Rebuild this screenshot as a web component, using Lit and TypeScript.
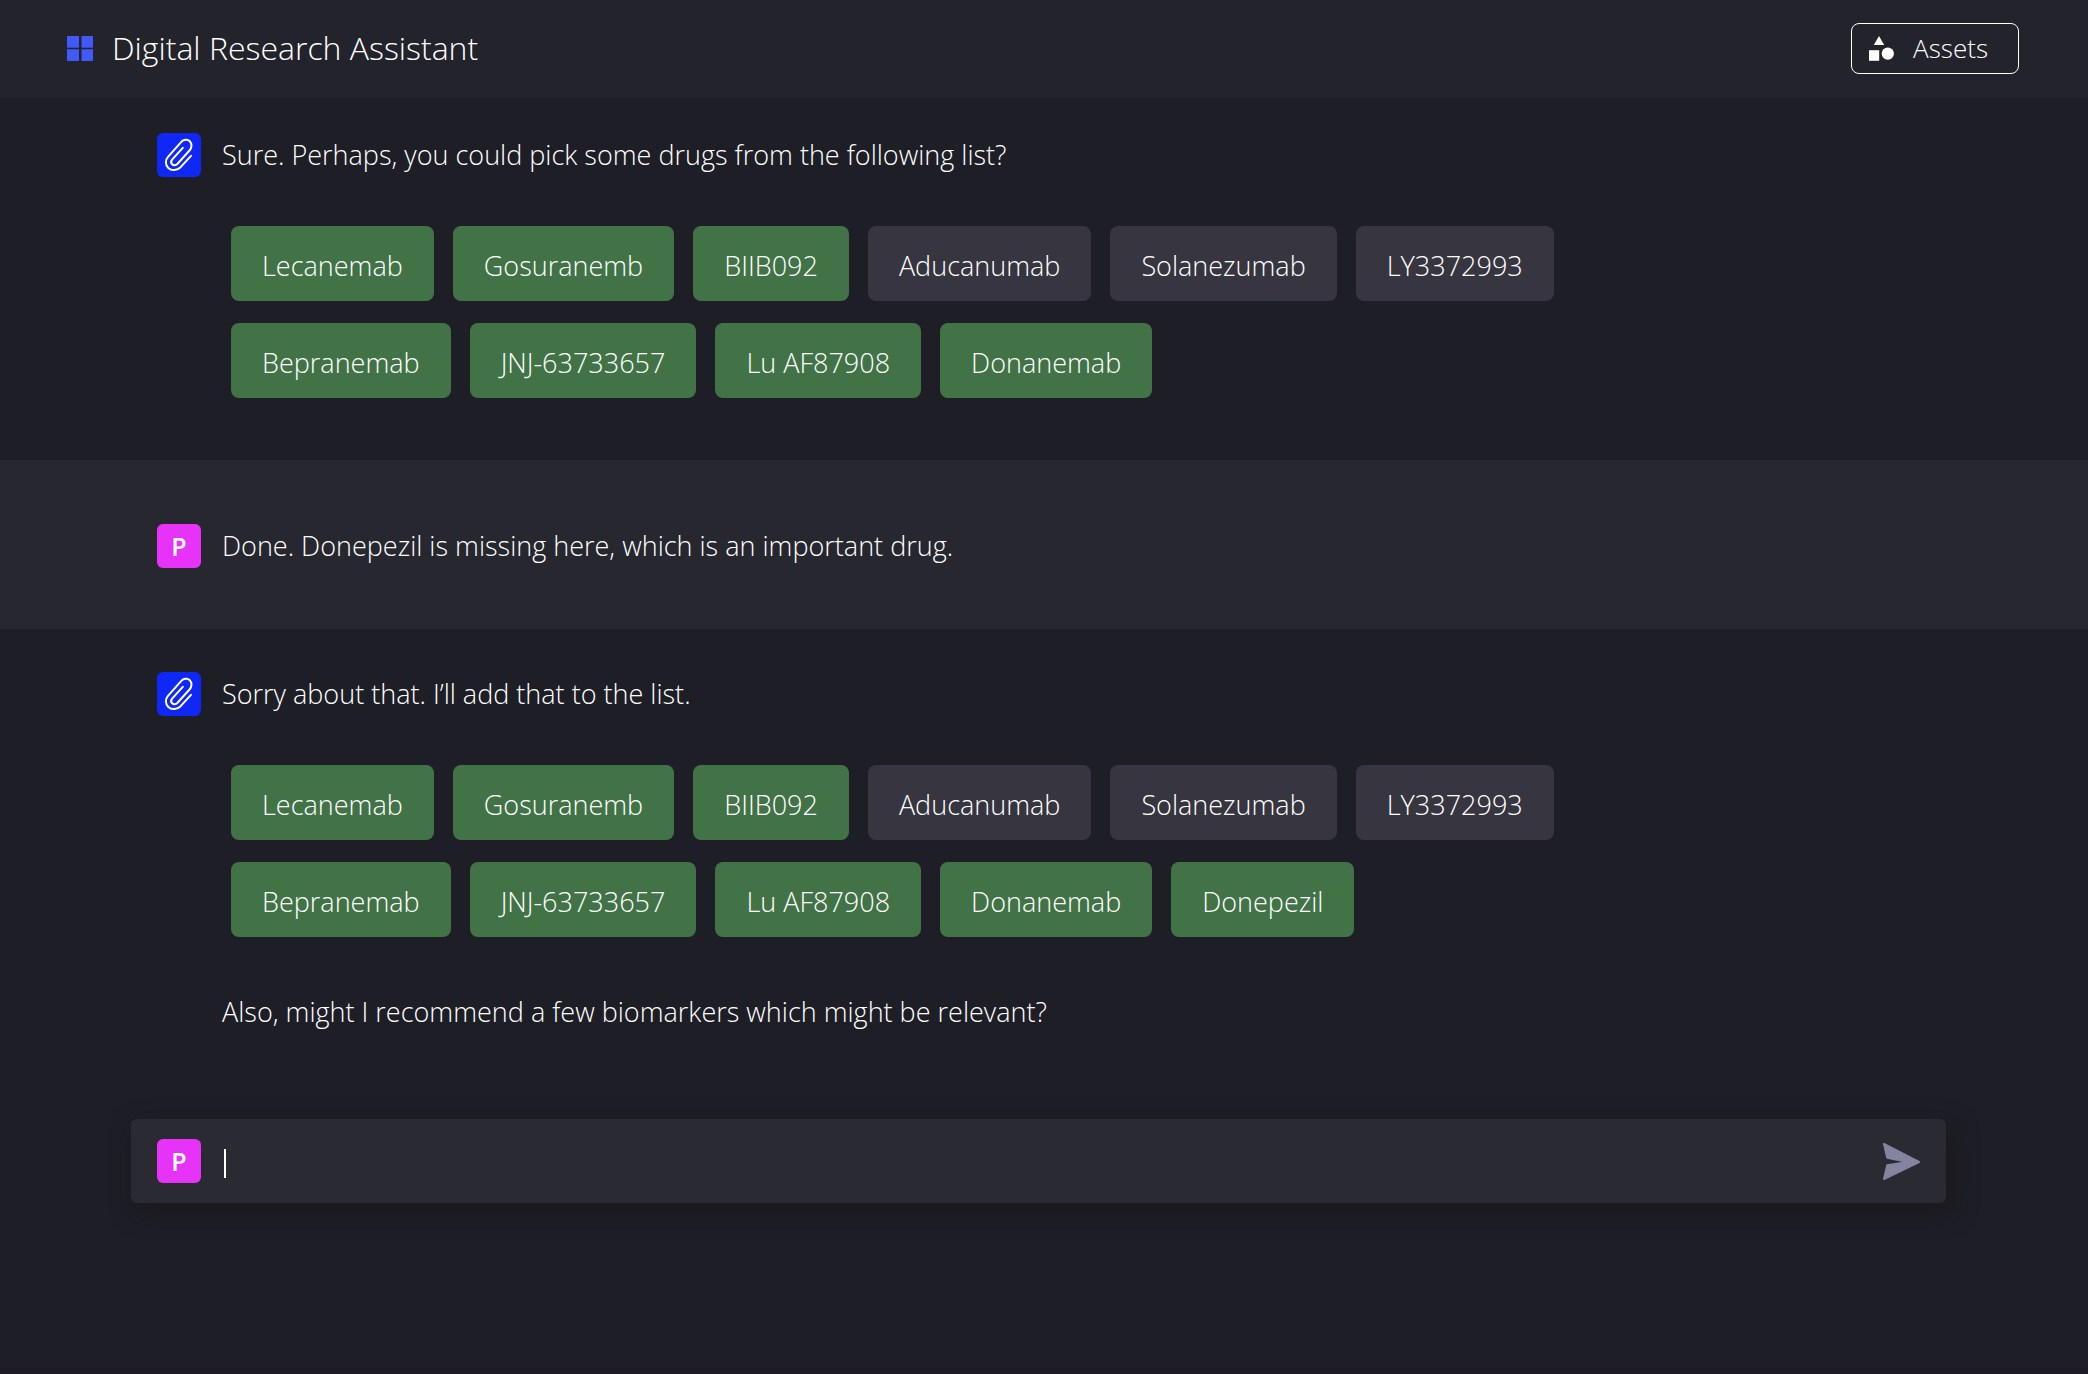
import { LitElement, html, css, svg, nothing } from "lit";
import { customElement, property, state } from "lit/decorators.js";
import { classMap } from "lit/directives/class-map.js";

interface Drug {
  name: string;
  selected: boolean;
}

interface Message {
  author: "assistant" | "user";
  text: string;
  drugs?: Drug[];
  followUp?: string;
}

const baseDrugs: Drug[] = [
  { name: "Lecanemab", selected: true },
  { name: "Gosuranemb", selected: true },
  { name: "BIIB092", selected: true },
  { name: "Aducanumab", selected: false },
  { name: "Solanezumab", selected: false },
  { name: "LY3372993", selected: false },
  { name: "Bepranemab", selected: true },
  { name: "JNJ-63733657", selected: true },
  { name: "Lu AF87908", selected: true },
  { name: "Donanemab", selected: true },
];

const conversation: Message[] = [
  {
    author: "assistant",
    text: "Sure. Perhaps, you could pick some drugs from the following list?",
    drugs: baseDrugs,
  },
  {
    author: "user",
    text: "Done. Donepezil is missing here, which is an important drug.",
  },
  {
    author: "assistant",
    text: "Sorry about that. I’ll add that to the list.",
    drugs: [...baseDrugs, { name: "Donepezil", selected: true }],
    followUp: "Also, might I recommend a few biomarkers which might be relevant?",
  },
];

const clip = svg`<path
  d="M35 22.8 L24.6 34.2 C21.2 37.6 15.6 38 12.3 34.9 C9 31.7 9.2 27 12 23.8 L24.4 9.8 C27.2 6.4 31.4 5.8 33.8 8.2 C36.2 10.6 36 14.6 33.5 17.5 L21.3 31 C19.8 32.5 17.6 32.7 16.2 31.3 C14.8 30 15 27.8 16.3 26.3 L26.8 14.8"
  fill="none" stroke="currentColor" stroke-width="2" stroke-linecap="round" stroke-linejoin="round" />`;

@customElement("chat-avatar")
export class ChatAvatar extends LitElement {
  @property() kind: "assistant" | "user" = "user";

  static styles = css`
    :host {
      display: block;
      flex: none;
    }
    .avatar {
      display: flex;
      align-items: center;
      justify-content: center;
      width: 44px;
      height: 44px;
      border-radius: 6px;
      background: #e633f7;
      color: #fff;
      font: 600 25px/44px "Open Sans", sans-serif;
    }
    .assistant {
      background: #0f28f8;
    }
    svg {
      display: block;
    }
  `;

  render() {
    return this.kind === "assistant"
      ? html`<div class="avatar assistant">
          <svg width="44" height="44" viewBox="1 0 44 44" aria-hidden="true">${clip}</svg>
        </div>`
      : html`<div class="avatar">P</div>`;
  }
}

@customElement("drug-picker")
export class DrugPicker extends LitElement {
  @property({ attribute: false }) drugs: Drug[] = [];
  @state() private toggled = new Set<string>();

  static styles = css`
    .chips {
      display: flex;
      flex-wrap: wrap;
      gap: 22px 19px;
      max-width: 1400px;
    }
    .chip {
      height: 75px;
      padding: 4px 31px 0;
      border: 0;
      border-radius: 8px;
      background: #363540;
      color: #fff;
      font: 300 27px/44px "Open Sans", sans-serif;
      cursor: pointer;
    }
    .selected {
      background: #417347;
    }
  `;

  private toggle(name: string) {
    const next = new Set(this.toggled);
    if (!next.delete(name)) next.add(name);
    this.toggled = next;
  }

  render() {
    return html`<div class="chips">
      ${this.drugs.map((drug) => {
        const on = drug.selected !== this.toggled.has(drug.name);
        return html`<button
          type="button"
          class=${classMap({ chip: true, selected: on })}
          aria-pressed=${on ? "true" : "false"}
          @click=${() => this.toggle(drug.name)}
        >${drug.name}</button>`;
      })}
    </div>`;
  }
}

@customElement("app-root")
export class AppRoot extends LitElement {
  static styles = css`
    :host {
      display: block;
      box-sizing: border-box;
      min-height: 100vh;
      border-bottom: 1px solid #1c1820;
      background: #1e1e26;
      color: #fff;
      font: 300 27px/44px "Open Sans", sans-serif;
    }
    svg {
      display: block;
      flex: none;
    }
    h1,
    p {
      margin: 0;
      font: inherit;
    }
    .header {
      display: flex;
      align-items: center;
      justify-content: space-between;
      box-sizing: border-box;
      height: 98px;
      padding: 0 69px 2px 67px;
      background: #23232b;
    }
    .brand {
      display: flex;
      align-items: center;
      gap: 19px;
    }
    .brand h1 {
      font-size: 32px;
    }
    .assets {
      display: flex;
      align-items: center;
      gap: 19px;
      height: 51px;
      padding: 0 30px 0 17px;
      border: 1px solid #fff;
      border-radius: 8px;
      background: none;
      color: #fff;
      font: 300 26px/44px "Open Sans", sans-serif;
      cursor: pointer;
    }
    .message {
      padding: 35px 157px 62px;
    }
    .message.user {
      padding: 64px 157px 61px;
      background: #26272f;
    }
    .message.user + .message {
      padding-top: 43px;
      padding-bottom: 0;
    }
    .line {
      display: flex;
      align-items: center;
      gap: 21px;
    }
    .options {
      padding: 49px 0 0 74px;
    }
    .follow-up {
      padding: 53px 0 0 65px;
    }
    .composer {
      display: flex;
      align-items: center;
      height: 84px;
      margin: 85px 142px 0 131px;
      padding: 0 25px 0 26px;
      border-radius: 6px;
      background: #2a2a33;
      box-shadow: 6px 8px 24px rgba(20, 20, 20, 0.5);
    }
    .field {
      display: flex;
      flex: 1;
      align-items: center;
      margin-left: 23px;
      padding-top: 4px;
    }
    .caret {
      flex: none;
      width: 2px;
      height: 29px;
      background: #fff;
    }
    .entry {
      flex: 1;
      min-width: 0;
      height: 44px;
      padding: 0;
      border: 0;
      outline: 0;
      background: none;
      color: inherit;
      font: inherit;
      caret-color: transparent;
    }
    .send {
      padding: 0;
      border: 0;
      background: none;
      color: #8484a0;
      cursor: pointer;
    }
  `;

  private renderMessage(message: Message) {
    return html`<section class=${classMap({ message: true, user: message.author === "user" })}>
      <div class="line">
        <chat-avatar kind=${message.author}></chat-avatar>
        <p>${message.text}</p>
      </div>
      ${message.drugs
        ? html`<div class="options"><drug-picker .drugs=${message.drugs}></drug-picker></div>`
        : nothing}
      ${message.followUp ? html`<p class="follow-up">${message.followUp}</p>` : nothing}
    </section>`;
  }

  render() {
    return html`
      <header class="header">
        <div class="brand">
          <svg width="26" height="25" viewBox="0 0 26 25" fill="#4059f8" aria-hidden="true">
            <rect width="12" height="11.7" />
            <rect x="14.5" width="11.5" height="11.7" />
            <rect y="13.2" width="12" height="11.8" />
            <rect x="14.5" y="13.2" width="11.5" height="11.8" />
          </svg>
          <h1>Digital Research Assistant</h1>
        </div>
        <button type="button" class="assets">
          <svg width="25" height="25" viewBox="0 0 25 25" fill="currentColor" aria-hidden="true">
            <path d="M10 0 L15.2 9 H4.8 Z" />
            <rect y="14.2" width="10.2" height="10.6" />
            <circle cx="18.8" cy="17.6" r="6.1" />
          </svg>
          Assets
        </button>
      </header>
      <main>
        ${conversation.map((message) => this.renderMessage(message))}
        <form class="composer" @submit=${(event: Event) => event.preventDefault()}>
          <chat-avatar kind="user"></chat-avatar>
          <div class="field">
            <span class="caret"></span>
            <input class="entry" type="text" aria-label="Message" autocomplete="off" />
          </div>
          <button type="submit" class="send" aria-label="Send">
            <svg width="39" height="39" viewBox="0 0 39 39" fill="currentColor" stroke="currentColor"
              stroke-width="2" stroke-linejoin="round" aria-hidden="true">
              <path d="M2 2 L37 20 L2 37 L5.2 23.2 L26 20 L5.2 15.8 Z" />
            </svg>
          </button>
        </form>
      </main>
    `;
  }
}
